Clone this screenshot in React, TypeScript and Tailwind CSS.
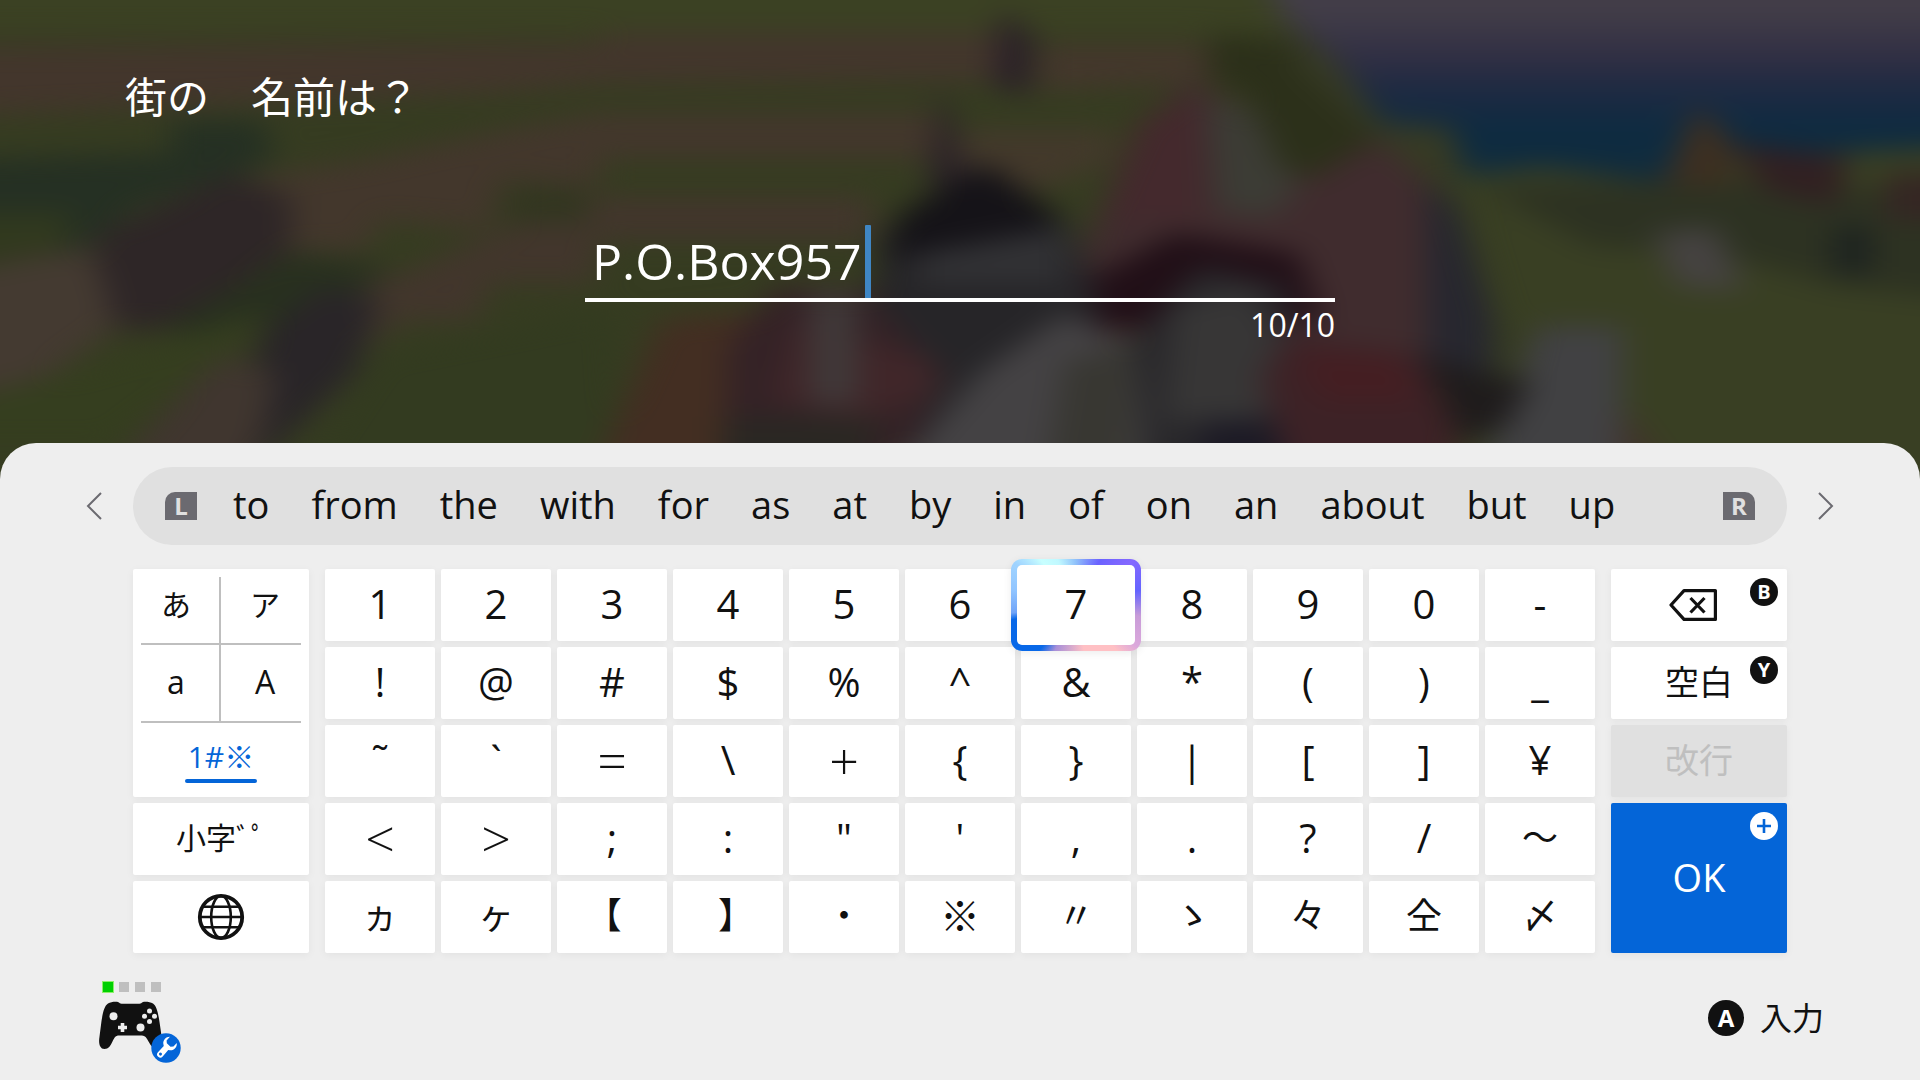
import type { ReactNode } from "react";

const words = ["to", "from", "the", "with", "for", "as", "at", "by", "in", "of", "on", "an", "about", "but", "up"];

const keys = [
    ["1", "2", "3", "4", "5", "6", "7", "8", "9", "0", "-"],
    ["!", "@", "#", "$", "%", "^", "&", "*", "(", ")", "_"],
    ["˜", "`", "=", "\\", "+", "{", "}", "|", "[", "]", "¥"],
    ["<", ">", ";", ":", "\"", "'", ",", ".", "?", "/", "〜"],
    ["ヵ", "ヶ", "【", "】", "・", "※", "〃", "ゝ", "々", "仝", "〆"],
];

const keyBase = "relative flex items-center justify-center rounded-[2px] shadow-[0_2px_8px_rgba(0,0,0,0.05)]";

// blurred town behind the prompt
const Scenery = () => (
    <svg
        className="absolute inset-x-0 top-0 h-[480px] w-full"
        viewBox="0 0 1568 1440"
        preserveAspectRatio="none"
        aria-hidden="true"
    >
        <defs>
            <filter id="soft" x="-5%" y="-5%" width="110%" height="110%" colorInterpolationFilters="sRGB">
                <feGaussianBlur stdDeviation="13 38" />
            </filter>
            <linearGradient id="sky" x1="0" y1="0" x2="0" y2="1">
                <stop offset="0" stopColor="#453f49" />
                <stop offset="0.2" stopColor="#423d48" />
                <stop offset="0.4" stopColor="#312f44" />
                <stop offset="0.55" stopColor="#1e2a42" />
                <stop offset="0.75" stopColor="#0d2b41" />
                <stop offset="1" stopColor="#122c3c" />
            </linearGradient>
        </defs>
        <rect width="1568" height="1440" fill="#363c21" />
        <g filter="url(#soft)">
            <rect x="-60" y="-90" width="1720" height="190" fill="#3b4123" />
            <path d="M1030 -90H1660V560H1190L1110 300L1065 180Z" fill="url(#sky)" />
            {/* terraces */}
            <path d="M-60 140L490 130V100H815V240L490 250L400 280L-60 350Z" fill="#43362c" />
            <path d="M848 135H1000V240L848 270Z" fill="#44372c" />
            <path d="M490 340H765V475H490V560L410 540L400 690L310 660L300 750L200 750L190 540L300 480L410 390Z" fill="#43372c" />
            <path d="M785 390H910V480L850 570L780 540Z" fill="#43392b" />
            <path d="M485 590H712V720H490L485 850L400 850L390 960H330L290 1060L240 1060L250 860L330 820L410 690Z" fill="#42362c" />
            <rect x="415" y="560" width="65" height="110" fill="#323620" />
            <path d="M140 360H215L225 480L110 620L60 760L-60 720V480L140 460Z" fill="#253023" />
            <path d="M-60 640L60 640L50 760L-60 830Z" fill="#31391e" />
            <path d="M190 520L240 600L235 760L130 990L70 980L80 700Z" fill="#2e2627" />
            <path d="M-60 830L75 740L95 980L20 1180L-60 1180Z" fill="#443a31" />
            <path d="M240 760L320 800L280 920L170 1020L130 980Z" fill="#28301f" />
            <path d="M265 860L310 900L290 1120L240 1290L200 1440H180L215 1000Z" fill="#292528" />
            <path d="M180 1060L225 1120L215 1300L190 1500H90L110 1330Z" fill="#40362f" />
            <path d="M70 1100L220 930L180 1080L90 1340H-60V1220Z" fill="#353e1f" />
            <path d="M310 1060L500 920L510 1500H230Z" fill="#333b20" />
            <path d="M818 30L844 110L840 290L812 260Z" fill="#2a2028" />
            <path d="M770 250L790 560H758Z" fill="#2a2128" />
            {/* foreground figures */}
            <path d="M540 960L620 930L600 1500H475Z" fill="#432e22" />
            <path d="M635 860L730 870L780 1110L770 1240L700 1500H590L595 1040Z" fill="#342226" />
            <path d="M650 960L760 1080L770 1180L700 1260L630 1200Z" fill="#402629" />
            <rect x="662" y="880" width="38" height="330" fill="#403939" />
            <path d="M590 1250H720L700 1500H590Z" fill="#2a2723" />
            <path d="M800 540L870 650L900 900L960 1380H740L770 1120L715 900L718 700Z" fill="#262528" />
            <path d="M805 490L866 650L850 690L725 780L735 640Z" fill="#151318" />
            <path d="M750 760L870 690V850H750Z" fill="#313134" />
            <path d="M970 240L1020 330L1130 400L1165 520L1175 1080L1140 1100L900 1000L885 740L925 420Z" fill="#402c2e" />
            <path d="M930 360L980 280V660H905Z" fill="#44292d" />
            <path d="M960 700L1060 760L1080 960L900 980L890 840Z" fill="#210f17" />
            <path d="M1000 1500L940 1380L920 1040L980 800L1050 860L1050 1500Z" fill="#29282b" />
            <path d="M985 300L1030 340L1060 560L1040 650L995 630Z" fill="#3c3c35" />
            <path d="M990 100L1070 130L1100 260L1125 420L1070 540L1045 500L1020 290L985 220Z" fill="#2c301a" />
            <path d="M1050 60L1090 180L1130 370L1185 380L1200 560L1170 560L1120 400L1060 200Z" fill="#363a24" />
            <path d="M870 940L925 1040L940 1500H710L800 1120Z" fill="#444244" />
            <path d="M870 1080L925 1040V1500H850Z" fill="#383732" />
            <path d="M960 920L1020 860L1050 1040L1030 1260H950Z" fill="#373636" />
            <path d="M1050 1010L1160 1060L1190 1300L1190 1500H1060L1030 1130Z" fill="#3d2226" />
            <path d="M1060 1060L1140 1070L1160 1200L1080 1200Z" fill="#451e22" />
            <path d="M985 1260H1040L1060 1500H970Z" fill="#1c1a25" />
            <path d="M1165 540L1190 620L1220 960V1120L1165 1120Z" fill="#27272f" />
            <path d="M1190 530L1260 500L1360 550L1400 470L1660 430V1500H1330L1320 1000L1230 1000Z" fill="#393f23" />
            <path d="M1210 560L1400 540L1660 600V920L1500 860L1400 760L1300 740Z" fill="#2d3222" />
            <path d="M1385 320L1415 420L1415 560L1358 550Z" fill="#3d2f21" />
            <path d="M1415 430L1510 470L1500 620L1440 570Z" fill="#312022" />
            <path d="M1540 520H1660V660H1540Z" fill="#352623" />
            <path d="M1350 700L1400 680L1425 870L1370 860Z" fill="#454241" />
            <path d="M1498 680H1528V820H1498Z" fill="#1c2220" />
            <path d="M1255 980L1325 980V1500H1200Z" fill="#414143" />
            <path d="M1160 1060L1210 1120L1250 1140L1230 1280L1195 1330Z" fill="#1f1c1c" />
            <path d="M1325 1220L1370 1440H1320Z" fill="#41332a" />
        </g>
    </svg>
);

const BackspaceIcon = () => (
    <svg className="h-8 w-12" viewBox="0 0 48 32" fill="none" stroke="#111" strokeWidth="3.2" aria-hidden="true">
        <path d="M15 1.600H46.400V30.400H15L2 16Z" strokeLinejoin="round" />
        <path d="M21.500 9L35.500 23.500M35.500 9L21.500 23.500" />
    </svg>
);

const GlobeIcon = () => (
    <svg className="size-12" viewBox="0 0 48 48" fill="none" stroke="#111" strokeWidth="2.6" aria-hidden="true">
        <circle cx="24" cy="24" r="21.2" strokeWidth="3.8" />
        <ellipse cx="24" cy="24" rx="9.8" ry="21" />
        <path d="M3 24H45M6.500 13.700H41.500M6.500 34.300H41.500" />
    </svg>
);

const ControllerIcon = () => (
    <svg className="h-16 w-[88px]" viewBox="0 0 88 64" aria-hidden="true">
        <path
            d="M13 2.500C16 .8 21 .4 23.500 1.200C24.600 1.700 25 2.700 26.500 2.700H44.500C46 2.700 46.500 1.600 47.500 1.200C50 .4 55 .8 58 2.500C61.500 5 63 11 64.500 21L67 38C67.600 43 66 47.500 62 47.500C58 47.500 56 45 53.500 40.500C51.500 36.500 50 34.500 47 34.500H24C20.500 34.500 19.500 36.500 17.500 40.500C15.500 45 13.500 48 9.500 48C5 48 3.700 43 4.200 38L6.500 20C8 10.500 9.500 5 13 2.500Z"
            fill="#111"
        />
        <g fill="#eee">
            <circle cx="18.500" cy="15.300" r="4" />
            <circle cx="45.500" cy="26.400" r="4" />
            <circle cx="54.500" cy="10" r="2.500" />
            <circle cx="54.500" cy="20.400" r="2.500" />
            <circle cx="49.500" cy="15.200" r="2.500" />
            <circle cx="59.500" cy="15.200" r="2.500" />
            <path d="M25.700 22H29.300V24.700H32V28.300H29.300V31H25.700V28.300H23V24.700H25.700Z" />
        </g>
        <circle cx="71" cy="47" r="14.700" fill="#0465d8" />
        <g transform="translate(71 47) rotate(42)">
            <path
                d="M-4.600 -11V-6L-2.500 -4H2.500L4.600 -6V-11C7.600 -8.500 7.800 -3.500 4.400 -1L3 0L3.200 8.500A3.200 3.200 0 0 1 -3.200 8.500L-3 0L-4.400 -1C-7.800 -3.500 -7.600 -8.500 -4.600 -11Z"
                fill="#fff"
            />
            <circle cx="0" cy="8.200" r="1.500" fill="#0465d8" />
        </g>
    </svg>
);

const Chevron = ({ d }: { d: string }) => (
    <svg className="h-7 w-4" viewBox="0 0 16 28" fill="none" stroke="#6b6a70" strokeWidth="2" aria-hidden="true">
        <path d={d} />
    </svg>
);

const Badge = ({ children }: { children: ReactNode }) => (
    <span className="absolute top-[9px] right-[9px] flex size-7 items-center justify-center rounded-full bg-[#111] text-xl font-bold text-white">
        {children}
    </span>
);

const FocusRing = () => (
    <span className="absolute -inset-2.5 z-10 rounded-[11px] bg-[conic-gradient(#8fc0fa_0deg,#6a62ff_28deg,#8468ff_52deg,#6464ff_77deg,#c89cd8_100deg,#dba8dc_124deg,#ffc0c4_138deg,#ffc0c4_170deg,#a88fd8_205deg,#0868e8_219deg,#0868e8_257deg,#70a4f8_263deg,#90c4ff_283deg,#a0d4ff_305deg,#c8ffff_322deg,#c0f8ff_338deg,#8fc0fa_360deg)] p-1.5 shadow-[0_2px_8px_rgba(0,0,0,0.08)]">
        <span className="block size-full rounded-[5px] bg-white" />
    </span>
);

const keySize = (key: string) => {
    if ("=+<>".includes(key)) return "text-[52px] font-light";
    if ("【】".includes(key)) return "text-4xl [font-feature-settings:'palt']";
    if (key > "\u3000") return "text-4xl";
    return "text-[40px]";
};

const Key = ({ label, focused }: { label: string; focused: boolean }) => (
    <button className={`${keyBase} bg-white pb-0.5 leading-none ${keySize(label)}`}>
        {focused && <FocusRing />}
        <span className="relative z-20">{label}</span>
    </button>
);

const App = () => {
    return (
        <div className="relative flex min-h-screen flex-col bg-[#363d20] font-['Open_Sans','Noto_Sans_CJK_JP',sans-serif] text-[#111]">
            <Scenery />
            <header className="relative flex-1 px-[125px] pt-[67px] text-white">
                <h1 className="text-[42px] leading-[60px]">
                    <label htmlFor="town">街の　名前は？</label>
                </h1>
                <div className="mx-auto mt-[98px] w-[750px]">
                    <div className="flex items-end border-b-4 border-white pl-1">
                        <input
                            id="town"
                            className="field-sizing-content h-[73px] bg-transparent px-[3px] text-[50px] outline-none"
                            defaultValue="P.O.Box957"
                            maxLength={10}
                        />
                        <span className="h-[73px] w-1.5 rounded-t-[1px] bg-[#3f86c4]" />
                    </div>
                    <p className="text-right text-[32px] leading-[46px]">10/10</p>
                </div>
            </header>

            <main className="relative rounded-t-[36px] bg-[#eee] pt-6">
                <div className="grid grid-cols-[133px_1fr_133px]">
                    <button className="pl-[86px]" aria-label="前へ">
                        <Chevron d="M15 1L2 14L15 27" />
                    </button>
                    <div className="flex h-[78px] items-center rounded-full bg-[#e0e0e0] px-8">
                        <span className="flex h-7 w-8 items-center justify-center rounded-tl-[10px] bg-[#6b6a70] text-2xl leading-none font-bold text-[#e0e0e0]">
                            L
                        </span>
                        <div className="flex flex-1 gap-[42px] pb-1 pl-9 text-[38px] leading-none">
                            {words.map((word) => (
                                <button key={word}>{word}</button>
                            ))}
                        </div>
                        <span className="flex h-7 w-8 items-center justify-center rounded-tr-[10px] bg-[#6b6a70] text-2xl leading-none font-bold text-[#e0e0e0]">
                            R
                        </span>
                    </div>
                    <button className="flex items-center justify-end pr-[86px]" aria-label="次へ">
                        <Chevron d="M1 1L14 14L1 27" />
                    </button>
                </div>

                <div className="grid grid-cols-[176px_1fr_176px] gap-4 px-[133px] pt-6">
                    {/* input modes */}
                    <div className="grid grid-rows-[repeat(5,72px)] gap-1.5">
                        <div className={`${keyBase} row-span-3 flex-col bg-white px-2 pt-2 text-3xl`}>
                            <div className="grid w-full grid-cols-2">
                                <button className="h-[68px] border-r-2 border-b-2 border-[#bfbfbf] pr-2 pb-2.5">あ</button>
                                <button className="h-[68px] border-b-2 border-[#bfbfbf] pb-2.5 pl-2">ア</button>
                                <button className="h-[78px] border-r-2 border-b-2 border-[#bfbfbf] pr-2 pb-0.5 text-[32px]">a</button>
                                <button className="h-[78px] border-b-2 border-[#bfbfbf] pb-0.5 pl-2 text-[32px]">A</button>
                            </div>
                            <button className="flex w-full flex-1 flex-col items-center pt-3 text-[#0465d8]">
                                <span className="leading-[44px]">1#※</span>
                                <span className="h-1 w-[72px] rounded-full bg-[#0465d8]" />
                            </button>
                        </div>
                        <button className={`${keyBase} bg-white pb-0.5 text-3xl`}>小字ﾞﾟ</button>
                        <button className={`${keyBase} bg-white`} aria-label="言語">
                            <GlobeIcon />
                        </button>
                    </div>

                    <div className="grid grid-cols-11 grid-rows-[repeat(5,72px)] gap-1.5">
                        {keys.flat().map((key) => (
                            <Key key={key} label={key} focused={key === "7"} />
                        ))}
                    </div>

                    <div className="grid grid-rows-[repeat(5,72px)] gap-1.5 text-[34px]">
                        <button className={`${keyBase} bg-white pr-3`} aria-label="削除">
                            <BackspaceIcon />
                            <Badge>B</Badge>
                        </button>
                        <button className={`${keyBase} bg-white pb-0.5`}>
                            空白
                            <Badge>Y</Badge>
                        </button>
                        <button className={`${keyBase} bg-[#e0e0e0] pb-0.5 text-[#bfbfbf]`} disabled>
                            改行
                        </button>
                        <button className={`${keyBase} row-span-2 bg-[#0465d8] pb-0.5 text-[38px] text-white`}>
                            OK
                            <svg className="absolute top-[9px] right-[9px] size-7" viewBox="0 0 28 28" aria-hidden="true">
                                <circle cx="14" cy="14" r="14" fill="#fff" />
                                <path d="M14 7V21M7 14H21" stroke="#0465d8" strokeWidth="2.6" />
                            </svg>
                        </button>
                    </div>
                </div>

                <footer className="flex h-[127px] items-start justify-between pr-24 pl-[95px] pt-[29px]">
                    <button className="flex flex-col items-start" aria-label="コントローラー">
                        <span className="flex gap-1.5 pl-2">
                            <span className="size-2.5 bg-[#00d000] outline-1 outline-[#8ef06a]" />
                            <span className="size-2.5 bg-[#bfbfbf]" />
                            <span className="size-2.5 bg-[#bfbfbf]" />
                            <span className="size-2.5 bg-[#bfbfbf]" />
                        </span>
                        <span className="pt-[9px]">
                            <ControllerIcon />
                        </span>
                    </button>
                    <p className="flex items-center gap-4 pt-3 text-[32px]">
                        <span className="flex size-9 items-center justify-center rounded-full bg-[#111] text-2xl font-bold text-white">
                            A
                        </span>
                        入力
                    </p>
                </footer>
            </main>
        </div>
    );
};

export default App;
